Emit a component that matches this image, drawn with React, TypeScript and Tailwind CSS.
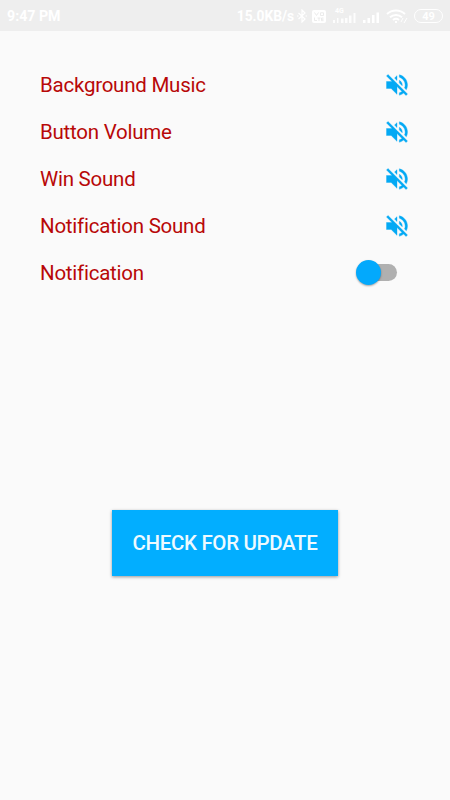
import React from 'react';

const sounds = ['Background Music', 'Button Volume', 'Win Sound', 'Notification Sound'];

function VolumeOff() {
  return (
    <svg viewBox="0 0 24 24" className="-mr-[0.5px] mb-[2px] size-7 fill-[#03a9f4] stroke-[#03a9f4] stroke-[0.3]">
      <path d="M16.5 12c0-1.77-1.02-3.29-2.5-4.03v2.21l2.45 2.45c.03-.2.05-.41.05-.63zm2.5 0c0 .94-.2 1.82-.54 2.64l1.51 1.51C20.63 14.91 21 13.5 21 12c0-4.28-2.99-7.86-7-8.77v2.06c2.89.86 5 3.54 5 6.71zM4.27 3L3 4.27 7.73 9H3v6h4l5 5v-6.73l4.25 4.25c-.67.52-1.42.93-2.25 1.18v2.06c1.38-.31 2.63-.95 3.69-1.81L19.73 21 21 19.73l-9-9L4.27 3zM12 4L9.91 6.09 12 8.18V4z" />
    </svg>
  );
}

function Bluetooth() {
  return (
    <svg viewBox="0 0 10 14" className="ml-[3px] h-3.5 w-2.5 fill-none stroke-white stroke-[1.2]">
      <path d="M1.5 4l6.5 6-3 3V1l3 3-6.5 6" />
      <path d="M0 7h1.5M8.5 7H10" />
    </svg>
  );
}

function VoLte() {
  return (
    <svg viewBox="0 0 14 13" className="ml-[5px] h-[13px] w-3.5">
      <rect width="14" height="13" rx="2" fill="white" />
      <path d="M2.5 2.5L4.5 5.5l2-3M8.5 2.8h3v2.7h-3zM2.5 7.5v3H5M5.5 8h3M7 8v3M11.5 8h-2v2.7h2M9.5 9.3h2" fill="none" stroke="#e9e9e9" strokeWidth="0.9" />
    </svg>
  );
}

function Signal() {
  return (
    <svg viewBox="0 0 18 14" className="h-3.5 w-[18px] fill-white">
      <path d="M0 11h2.5v3H0zM4.5 9H7v5H4.5zM9 6h2.5v8H9zM13.5 3.5H16V14h-2.5z" />
    </svg>
  );
}

function Wifi() {
  return (
    <svg viewBox="0 0 22 14" className="ml-[5px] h-3.5 w-[22px] fill-none stroke-white stroke-2">
      <path d="M1 5c5-4.7 13-4.7 18 0M4 8.2c3.4-3 8.6-3 12 0M7 11c1.8-1.4 4.2-1.4 6 0" />
      <path d="M10 12v2" />
      <path d="M15 13l2-4M18 14l3-5" strokeWidth="1" />
    </svg>
  );
}

export default function App() {
  return (
    <main className="flex h-[800px] w-[450px] flex-col bg-[#fafafa] font-['Roboto',sans-serif]">
      <header className="flex h-[31px] items-center bg-[#eeeeee] pr-[7px] pl-[7px] pt-px text-[13.8px] font-bold text-white">
        <span className="pt-[2px] text-[14.2px]">9:47 PM</span>
        <span className="ml-auto whitespace-nowrap pt-px tracking-[-0.05px]">15.0KB/s</span>
        <Bluetooth />
        <VoLte />
        <div className="relative ml-[7px] h-3.5">
          <span className="absolute -top-[2px] left-0.5 text-[7px] leading-[8px]">4G</span>
          <svg viewBox="0 0 24 14" className="h-3.5 w-6 fill-white">
            <path d="M0 11h2v3H0zM4 9h1.5v5H4zM8 9.5h2.5V14H8zM12 9h2.5v5H12zM16 6.5h2.5V14H16zM20.5 4h2v10h-2z" opacity=".85" />
          </svg>
        </div>
        <div className="ml-[6px]"><Signal /></div>
        <Wifi />
        <span className="ml-[6px] flex h-[14px] w-[29px] items-center justify-center rounded-full border border-white text-[11px] leading-none">49</span>
      </header>

      <section className="flex flex-col pt-[31px] pr-10 pl-10 text-[20.5px] tracking-[-0.24px] text-[#b80808]">
        {sounds.map((label) => (
          <div key={label} className="flex h-[47px] items-center justify-between">
            <span>{label}</span>
            <VolumeOff />
          </div>
        ))}
        <div className="flex h-[47px] items-center justify-between">
          <span>Notification</span>
          <div className="mr-[13.5px] mb-[2px] flex h-[17px] w-[38px] items-center rounded-full bg-[#b0b0b0]">
            <span className="-ml-[3px] size-[25px] shrink-0 rounded-full bg-[#03a9fc] shadow-[0_1px_2px_rgba(0,0,0,0.35)]" />
          </div>
        </div>
      </section>

      <button className="mt-[212.5px] h-[66.5px] w-[226px] self-center bg-[#02aeff] pt-[2px] text-[20.5px] font-medium tracking-[-0.35px] text-[#eefaff] shadow-[0_1px_3px_rgba(0,0,0,0.4)]">
        CHECK FOR UPDATE
      </button>
    </main>
  );
}
